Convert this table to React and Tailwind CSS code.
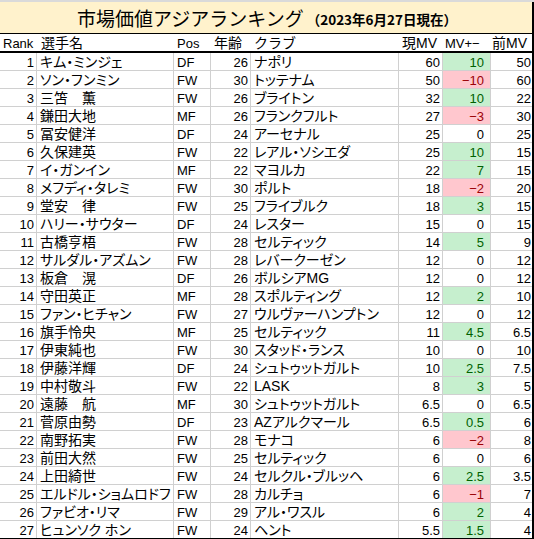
import React from "react";

const rows = [
  [1, "キム・ミンジェ", "DF", 26, "ナポリ", "60", "10", "50", "g"],
  [2, "ソン・フンミン", "FW", 30, "トッテナム", "50", "−10", "60", "r"],
  [3, "三笘　薫", "FW", 26, "ブライトン", "32", "10", "22", "g"],
  [4, "鎌田大地", "MF", 26, "フランクフルト", "27", "−3", "30", "r"],
  [5, "冨安健洋", "DF", 24, "アーセナル", "25", "0", "25", ""],
  [6, "久保建英", "FW", 22, "レアル・ソシエダ", "25", "10", "15", "g"],
  [7, "イ・ガンイン", "MF", 22, "マヨルカ", "22", "7", "15", "g"],
  [8, "メフディ・タレミ", "FW", 30, "ポルト", "18", "−2", "20", "r"],
  [9, "堂安　律", "FW", 25, "フライブルク", "18", "3", "15", "g"],
  [10, "ハリー・サウター", "DF", 24, "レスター", "15", "0", "15", ""],
  [11, "古橋亨梧", "FW", 28, "セルティック", "14", "5", "9", "g"],
  [12, "サルダル・アズムン", "FW", 28, "レバークーゼン", "12", "0", "12", ""],
  [13, "板倉　滉", "DF", 26, "ボルシアMG", "12", "0", "12", ""],
  [14, "守田英正", "MF", 28, "スポルティング", "12", "2", "10", "g"],
  [15, "ファン・ヒチャン", "FW", 27, "ウルヴァーハンプトン", "12", "0", "12", ""],
  [16, "旗手怜央", "MF", 25, "セルティック", "11", "4.5", "6.5", "g"],
  [17, "伊東純也", "FW", 30, "スタッド・ランス", "10", "0", "10", ""],
  [18, "伊藤洋輝", "DF", 24, "シュトゥットガルト", "10", "2.5", "7.5", "g"],
  [19, "中村敬斗", "FW", 22, "LASK", "8", "3", "5", "g"],
  [20, "遠藤　航", "MF", 30, "シュトゥットガルト", "6.5", "0", "6.5", ""],
  [21, "菅原由勢", "DF", 23, "AZアルクマール", "6.5", "0.5", "6", "g"],
  [22, "南野拓実", "FW", 28, "モナコ", "6", "−2", "8", "r"],
  [23, "前田大然", "FW", 25, "セルティック", "6", "0", "6", ""],
  [24, "上田綺世", "FW", 24, "セルクル・ブルッヘ", "6", "2.5", "3.5", "g"],
  [25, "エルドル・ショムロドフ", "FW", 28, "カルチョ", "6", "−1", "7", "r"],
  [26, "ファビオ・リマ", "FW", 29, "アル・ワスル", "6", "2", "4", "g"],
  [27, "ヒュンソク ホン", "FW", 24, "ヘント", "5.5", "1.5", "4", "g"],
];

const grid = "grid grid-cols-[37px_137px_37px_40px_148px_44px_48px_41px]";
const cell = "flex items-end h-[17px] leading-[15px] overflow-hidden whitespace-nowrap";
const vline = "border-r border-[#d0d0d0]";

export default function App() {
  return (
    <div className="w-[534px] bg-white text-black font-['Liberation_Sans','Noto_Sans_CJK_JP',sans-serif] text-[13px]">
      <div className="h-[2px] bg-[#dadada]" />
      <div className="border-r-2 border-black">
        <div className="h-[32px] bg-[#fff2cc] border-b border-black flex items-center justify-center pl-[2px]">
          <span className="font-['Noto_Sans_CJK_JP',sans-serif] text-[19px] leading-[24px]">
            市場価値アジアランキング
          </span>
          <span className="font-['Noto_Sans_CJK_JP',sans-serif] font-bold text-[13.5px] leading-[20px] ml-[3px] mt-[2px]">
            （2023年6月27日現在）
          </span>
        </div>
        <div className={`${grid} h-[19px] border-b-2 border-black`}>
          <div className={`${cell} pl-[3px]`}>Rank</div>
          <div className={`${cell} pl-[4px] text-[14px]`}>選手名</div>
          <div className={`${cell} pl-[3px]`}>Pos</div>
          <div className={`${cell} pl-[3px] text-[14px]`}>年齢</div>
          <div className={`${cell} pl-[3px] text-[14px]`}>クラブ</div>
          <div className={`${cell} pl-[3px] text-[14px]`}>現MV</div>
          <div className={`${cell} pl-[2px]`}>MV+−</div>
          <div className={`${cell} pl-[1px] text-[14px]`}>前MV</div>
        </div>
        {rows.map((r, i) => {
          const last = i === rows.length - 1;
          const fill =
            r[8] === "g"
              ? "bg-[#c6efce] text-[#006100]"
              : r[8] === "r"
              ? "bg-[#ffc7ce] text-[#9c0006]"
              : "";
          return (
            <div
              key={r[0]}
              className={`${grid} h-[18px] border-b ${last ? "border-black" : "border-[#d0d0d0]"}`}
            >
              <div className={`${cell} ${vline} justify-end pr-[2px]`}>{r[0]}</div>
              <div className={`${cell} ${vline} pl-[3px] text-[14px] [font-feature-settings:'palt']`}>{r[1]}</div>
              <div className={`${cell} ${vline} pl-[3px]`}>{r[2]}</div>
              <div className={`${cell} ${vline} justify-end pr-[2px]`}>{r[3]}</div>
              <div className={`${cell} ${vline} pl-[3px] text-[14px] [font-feature-settings:'palt']`}>{r[4]}</div>
              <div className={`${cell} ${vline} justify-end pr-[2px]`}>{r[5]}</div>
              <div className={`${cell} ${vline} justify-end pr-[6px] ${fill}`}>{r[6]}</div>
              <div className={`${cell} justify-end pr-[1px]`}>{r[7]}</div>
            </div>
          );
        })}
      </div>
    </div>
  );
}
